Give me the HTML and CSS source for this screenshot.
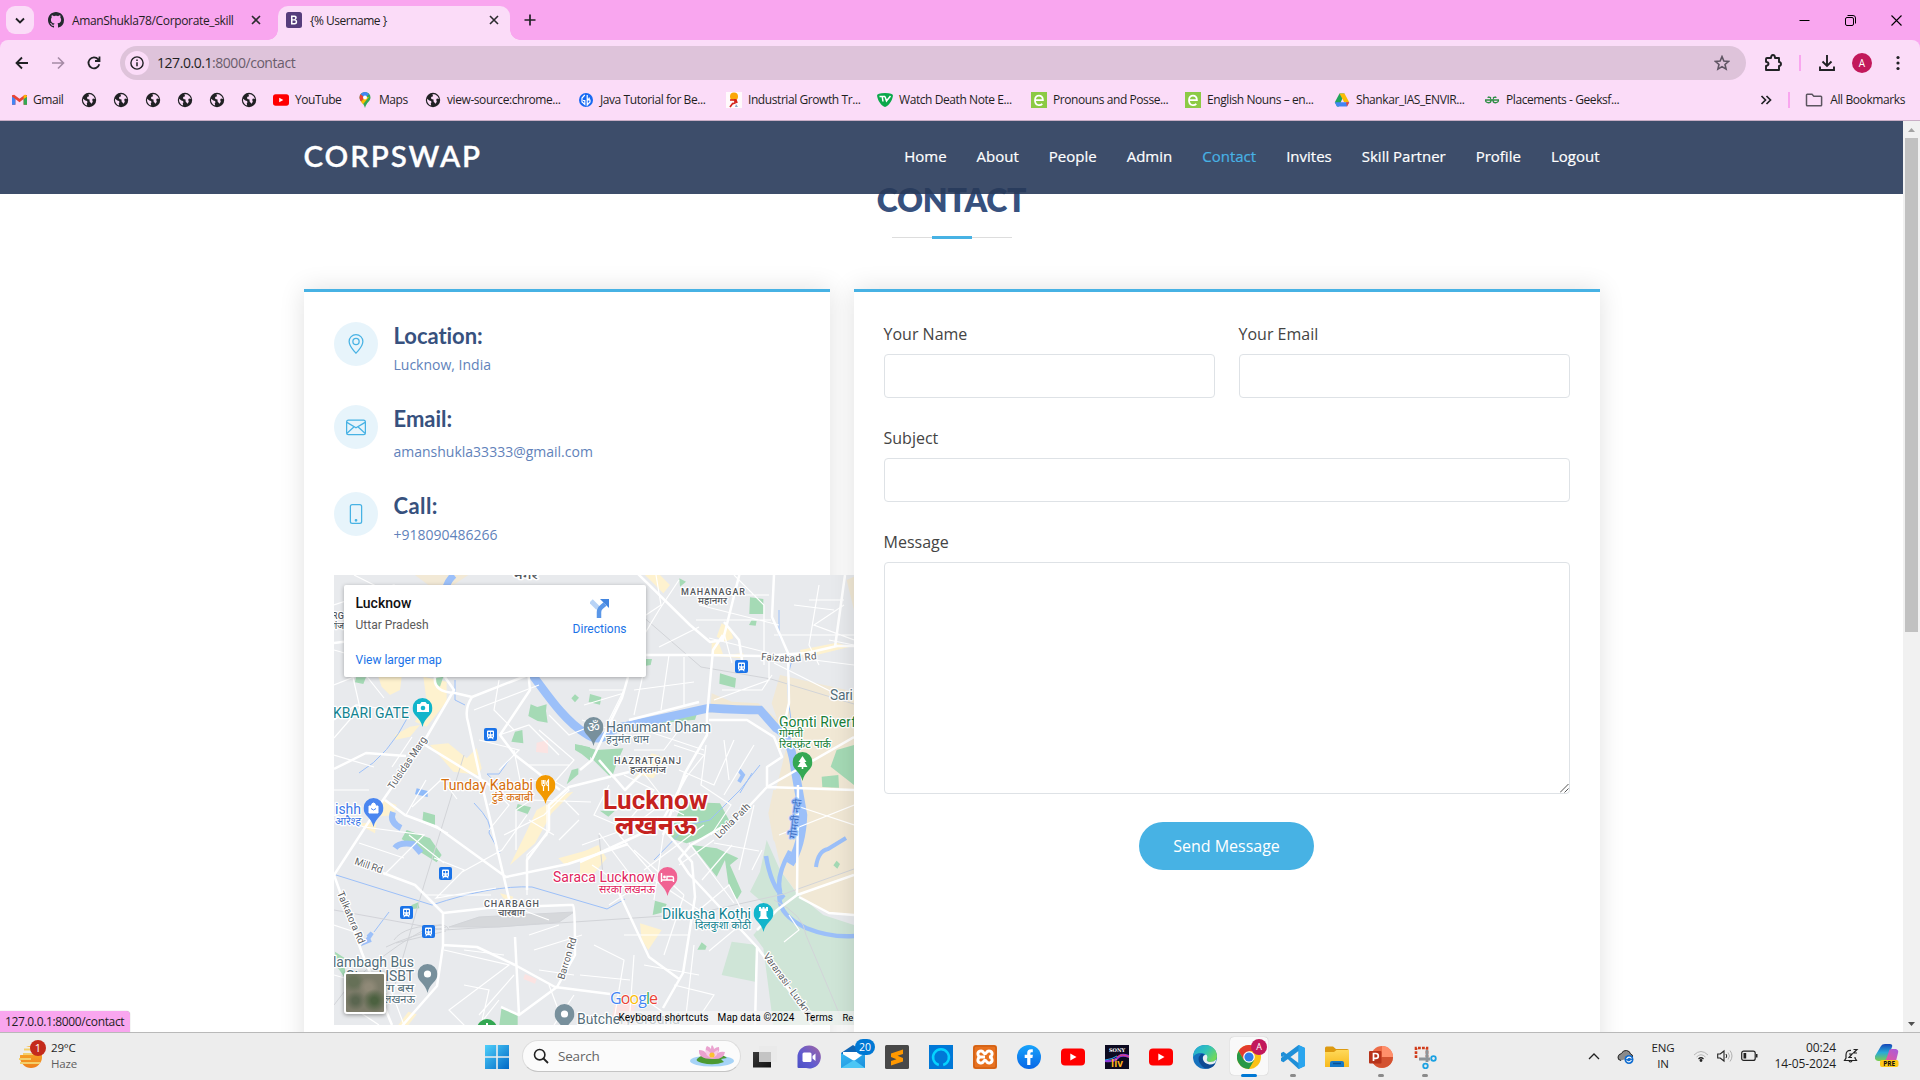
FILE: index.html
```html
<!DOCTYPE html>
<html lang="en">
<head>
<meta charset="utf-8">
<title>{% Username }</title>
<link rel="stylesheet" href="styles.css">
</head>
<body>
<svg class="defs" width="0" height="0" aria-hidden="true">
  <defs>
    <linearGradient id="gWin" x1="0" y1="0" x2="1" y2="1"><stop offset="0" stop-color="#4fd0fb"/><stop offset="1" stop-color="#0067c5"/></linearGradient>
    <linearGradient id="gTeams" x1="1" y1="0" x2="0" y2="1"><stop offset="0" stop-color="#a266a4"/><stop offset=".6" stop-color="#5f5bd0"/><stop offset="1" stop-color="#4a4fc4"/></linearGradient>
    <linearGradient id="gMail" x1="0" y1="0" x2="1" y2="1"><stop offset="0" stop-color="#36b7f2"/><stop offset="1" stop-color="#1a8fdc"/></linearGradient>
    <linearGradient id="gEdge" x1="0" y1="0" x2="1" y2=".6"><stop offset="0" stop-color="#1fa6dd"/><stop offset=".55" stop-color="#32c3b8"/><stop offset="1" stop-color="#72d85a"/></linearGradient>
    <linearGradient id="gFb" x1="0" y1="0" x2="0" y2="1"><stop offset="0" stop-color="#18a3fb"/><stop offset="1" stop-color="#0866e6"/></linearGradient>
    <linearGradient id="gFold" x1="0" y1="0" x2="0" y2="1"><stop offset="0" stop-color="#ffd95a"/><stop offset="1" stop-color="#f7b91c"/></linearGradient>
    <linearGradient id="gSun" x1="0" y1="0" x2="0" y2="1"><stop offset="0" stop-color="#fbb52c"/><stop offset="1" stop-color="#ee7f1b"/></linearGradient>
    <linearGradient id="gCop1" x1="0" y1="0" x2="0" y2="1"><stop offset="0" stop-color="#1546b8"/><stop offset=".5" stop-color="#28a9d8"/><stop offset="1" stop-color="#7fce4a"/></linearGradient>
    <linearGradient id="gCop2" x1="1" y1="0" x2="0" y2="1"><stop offset="0" stop-color="#a45be0"/><stop offset="1" stop-color="#f0568f"/></linearGradient>
    <linearGradient id="gTask" x1="0" y1="0" x2="1" y2="1"><stop offset="0" stop-color="#3b3b3b"/><stop offset="1" stop-color="#111111"/></linearGradient>
    <symbol id="globe" viewBox="0 0 16 16"><circle cx="8" cy="8" r="7.2" fill="#202124"/><path d="M2.2 6.8 4.3 8.6 6 9l.6 1.2-.8.8.3 2.6C3.500 12.700 2 10.400 2 8zM7.400 2.200c3.300-.3 6 1.900 6.500 4.800L12 6.500l-.8 1.300.6 2-1.300 1.900L8.600 9.500 8.500 7.600 6.300 6.900 6.100 5l2-.8z" fill="#fbdcf8"/></symbol>
    <symbol id="yt" viewBox="0 0 24 18"><rect y=".5" width="24" height="17" rx="4" fill="#f00"/><path d="M9.300 5.500v7l6.200-3.500z" fill="#fff"/></symbol>
    <symbol id="close" viewBox="0 0 10 10"><path d="M1 1l8 8M9 1L1 9" stroke="#2b2b2e" stroke-width="1.600"/></symbol>
    <symbol id="ebook" viewBox="0 0 16 16"><rect width="16" height="16" fill="#8cca45"/><path d="M3.800 8.200h8.100C12 2 4 2 4 8.200c0 6 5.500 5.600 7.300 3.600" fill="none" stroke="#fff" stroke-width="1.800"/></symbol>
    <symbol id="train" viewBox="0 0 13 13"><rect width="13" height="13" rx="2" fill="#1a73e8"/><path d="M4 2.500h5q1 0 1 1V9L9 10l.8 1.300H8.600L8 10.300H5l-.6 1H3.200L4 10 3 9V3.500q0-1 1-1z" fill="#fff"/><path d="M4.200 4h1.900v2.200H4.200zM6.900 4h1.900v2.200H6.900zM4.200 7.500h1.200v1.200H4.200zM7.600 7.500h1.200v1.200H7.600z" fill="#1a73e8"/></symbol>
    <symbol id="pin" viewBox="0 0 20 29"><path d="M10 0a10 10 0 0 1 10 10c0 8-8 9-10 19C8 19 0 18 0 10A10 10 0 0 1 10 0z"/></symbol>
  </defs>
</svg>

<div class="tabstrip">
  <div class="tab-search"><svg width="10" height="7" viewBox="0 0 10 7"><path d="M1 1.500 5 5.500 9 1.500" fill="none" stroke="#202124" stroke-width="1.800"/></svg></div>
  <div class="tab">
    <svg width="16" height="16" viewBox="0 0 16 16"><path fill="#24292f" d="M8 0C3.580 0 0 3.580 0 8c0 3.540 2.290 6.530 5.470 7.590.4.070.55-.17.55-.38 0-.19-.01-.82-.01-1.490-2.010.37-2.530-.49-2.690-.94-.09-.23-.48-.94-.82-1.130-.28-.15-.68-.52-.01-.53.63-.01 1.080.58 1.230.82.72 1.210 1.870.87 2.330.66.070-.52.280-.87.510-1.070-1.780-.2-3.640-.89-3.640-3.950 0-.87.310-1.590.82-2.150-.08-.2-.36-1.020.080-2.120 0 0 .67-.21 2.200.82.640-.18 1.320-.27 2-.27s1.360.09 2 .27c1.530-1.040 2.200-.82 2.200-.82.440 1.100.160 1.920.080 2.120.51.560.82 1.270.82 2.150 0 3.070-1.870 3.750-3.650 3.950.29.250.54.730.54 1.480 0 1.070-.01 1.930-.01 2.200 0 .21.150.46.550.38A8.010 8.010 0 0 0 16 8c0-4.420-3.580-8-8-8z"/></svg>
    <span class="tab-title t-git">AmanShukla78/Corporate_skill</span>
    <svg class="tab-x" width="10" height="10"><use href="#close"/></svg>
  </div>
  <div class="tab active">
    <svg width="16" height="16" viewBox="0 0 16 16"><rect width="16" height="16" rx="2.500" fill="#563d7c"/><path d="M5 3.500h3.500q2.300 0 2.300 2.100 0 1.500-1.300 1.900 1.700.4 1.700 2.300 0 2.700-2.700 2.700H5zM6.500 5v2.200h1.700q1 0 1-1.100T8.200 5zM6.500 8.500v2.600h2q1.200 0 1.200-1.300T8.500 8.500z" fill="#fff" fill-rule="evenodd"/></svg>
    <span class="tab-title">{% Username }</span>
    <svg class="tab-x" width="10" height="10"><use href="#close"/></svg>
  </div>
  <svg class="new-tab" width="12" height="12" viewBox="0 0 12 12"><path d="M6 .5v11M.5 6h11" stroke="#202124" stroke-width="1.700"/></svg>
  <div class="win-controls">
    <svg width="11" height="11" viewBox="0 0 11 11"><path d="M.5 5.500h10" stroke="#000"/></svg>
    <svg width="11" height="11" viewBox="0 0 11 11"><rect x=".5" y="2.500" width="8" height="8" rx="1.500" fill="none" stroke="#000"/><path d="M2.500.5H8q2.500 0 2.500 2.500v5.500" fill="none" stroke="#000"/></svg>
    <svg width="11" height="11" viewBox="0 0 11 11"><path d="M.5.5l10 10M10.500.5l-10 10" stroke="#000" stroke-width="1.100"/></svg>
  </div>
</div>

<div class="toolbar">
  <div class="nav-icons">
    <svg width="16" height="16" viewBox="0 0 16 16"><path d="M14 8H3M8 2.500 2.500 8 8 13.500" fill="none" stroke="#202124" stroke-width="1.800"/></svg>
    <svg width="16" height="16" viewBox="0 0 16 16"><path d="M2 8h11M8 2.500 13.500 8 8 13.500" fill="none" stroke="#a58aa5" stroke-width="1.600"/></svg>
    <svg width="16" height="16" viewBox="0 0 16 16"><path d="M13.300 9.300A5.500 5.500 0 1 1 12.200 4.300L13.500 6M13.500 1.500V6H9" fill="none" stroke="#202124" stroke-width="1.800"/></svg>
  </div>
  <div class="omnibox">
    <span class="site-info"><svg width="14" height="14" viewBox="0 0 14 14"><circle cx="7" cy="7" r="6.100" fill="none" stroke="#202124" stroke-width="1.400"/><path d="M7 6.200v4M7 3.500v1.400" stroke="#202124" stroke-width="1.500"/></svg></span>
    <span class="url">127.0.0.1<i>:8000/contact</i></span>
    <svg class="star" width="16" height="16" viewBox="0 0 18 18"><path d="M9 1.800l2.100 4.900 5.300.5-4 3.500 1.200 5.200L9 13.100l-4.600 2.800 1.200-5.200-4-3.500 5.300-.5z" fill="none" stroke="#5f5563" stroke-width="1.800"/></svg>
  </div>
  <div class="tools">
    <svg width="20" height="20" viewBox="0 0 20 20"><path d="M4 5h4q0-3 2-3t2 3h4v4q2 .2 2 2t-2 2v4H3v-4q2.500-.5 2.500-2.200T3 8.700V6q0-1 1-1z" fill="none" stroke="#202124" stroke-width="1.900" stroke-linejoin="round"/></svg>
    <span class="sep"></span>
    <svg width="18" height="18" viewBox="0 0 18 18"><path d="M9 1v10.500M4.500 7.500 9 12l4.500-4.500M2 12.500V16h14v-3.500" fill="none" stroke="#202124" stroke-width="1.900"/></svg>
    <span class="avatar">A</span>
    <svg width="4" height="16" viewBox="0 0 4 16" fill="#202124"><circle cx="2" cy="2.500" r="1.600"/><circle cx="2" cy="8" r="1.600"/><circle cx="2" cy="13.500" r="1.600"/></svg>
  </div>
</div>

<div class="bookmarks">
  <div class="bm"><svg width="15" height="16" viewBox="0 0 16 16"><path d="M0 3v10h3.600V7L8 10.300 12.400 7v6H16V3L13.700 2.300 8 6.700 2.300 2.300z" fill="#ea4335"/><path d="M0 4.200V13h3.600V7z" fill="#4285f4"/><path d="M12.400 7v6H16V4.200z" fill="#34a853"/><path d="M12.400 7V3.300l2-.9L16 4v.4z" fill="#fbbc04"/></svg><span>Gmail</span></div>
  <div class="bm"><svg width="16" height="16"><use href="#globe"/></svg></div>
  <div class="bm"><svg width="16" height="16"><use href="#globe"/></svg></div>
  <div class="bm"><svg width="16" height="16"><use href="#globe"/></svg></div>
  <div class="bm"><svg width="16" height="16"><use href="#globe"/></svg></div>
  <div class="bm"><svg width="16" height="16"><use href="#globe"/></svg></div>
  <div class="bm"><svg width="16" height="16"><use href="#globe"/></svg></div>
  <div class="bm"><svg width="16" height="12"><use href="#yt"/></svg><span>YouTube</span></div>
  <div class="bm"><svg width="16" height="16" viewBox="0 0 16 16"><path d="M8 0a5.500 5.500 0 0 1 5.500 5.500C13.500 9.500 9.500 10 8 16 6.500 10 2.500 9.500 2.500 5.500A5.500 5.500 0 0 1 8 0z" fill="#34a853"/><path d="M3.800 2 8 5.500 4 9.800Q1.200 5.500 3.800 2z" fill="#ea4335"/><path d="M3.700 2.100Q8-2 12 2L8 6z" fill="#4285f4"/><path d="M8 5.500 4 9.800l2 2.400L12 5z" fill="#fbbc04"/><circle cx="8" cy="5.500" r="2" fill="#fff"/></svg><span>Maps</span></div>
  <div class="bm"><svg width="16" height="16"><use href="#globe"/></svg><span>view-source:chrome...</span></div>
  <div class="bm"><svg width="16" height="16" viewBox="0 0 16 16"><circle cx="8" cy="8" r="7" fill="#1769f2"/><path d="M6.800 3 4 6v4l2.800 2.500V8.500H5M9.200 3v4h2v-1.500M9.200 13 12 10V8H9.200z" fill="none" stroke="#fff" stroke-width="1.200"/></svg><span>Java Tutorial for Be...</span></div>
  <div class="bm"><svg width="16" height="16" viewBox="0 0 16 16"><rect width="16" height="16" fill="#fffafc"/><circle cx="8" cy="4.500" r="4" fill="#fba706"/><path d="M9 7v4l-3 1M4 8h6l1 3M7 11l-3 4" fill="none" stroke="#d4221b" stroke-width="1.700"/><path d="M10 12l2 3H9z" fill="#8fa3c4"/></svg><span>Industrial Growth Tr...</span></div>
  <div class="bm"><svg width="16" height="16" viewBox="0 0 16 16"><path d="M0 3.500Q0 1 8 1t8 2.500C15 10 11 14 8 15 5 14 1 10 0 3.500z" fill="#0ba84b"/><path d="M2.500 4.500H8M5.200 4.500 6 9.500M8 4.500l1.500 4.500 4-5" fill="none" stroke="#fff" stroke-width="1.500"/></svg><span>Watch Death Note E...</span></div>
  <div class="bm"><svg width="16" height="16"><use href="#ebook"/></svg><span>Pronouns and Posse...</span></div>
  <div class="bm"><svg width="16" height="16"><use href="#ebook"/></svg><span>English Nouns – en...</span></div>
  <div class="bm"><svg width="16" height="16" viewBox="0 0 16 16"><path d="M5.500 1.500h5L5 14.500H3L.8 10.300z" fill="#21a45a"/><path d="M5.500 1.500h5l4.700 8.800h-5z" fill="#fbbc04"/><path d="M3.300 10.300h11.900L13 14.500H3L.8 10.300z" fill="#4285f4"/><path d="M12 10.300h3.200L13 14.500z" fill="#ea4335"/></svg><span>Shankar_IAS_ENVIR...</span></div>
  <div class="bm"><svg width="16" height="16" viewBox="0 0 16 16"><path d="M7 6Q5.500 4.700 3.500 5.500M1 8h14M7 8.500c0 3-5 3-5.500 0M9 6q1.500-1.300 3.500-.5M9 8.500c0 3 5 3 5.500 0" fill="none" stroke="#2f8d46" stroke-width="1.300"/><path d="M7.200 8Q7 5 4 5M8.800 8q.2-3 3.200-3" fill="none" stroke="#2f8d46" stroke-width="1"/></svg><span>Placements - Geeksf...</span></div>
  <div class="bm-right">
    <svg width="12" height="10" viewBox="0 0 12 10"><path d="M1.500 1l4 4-4 4M6.500 1l4 4-4 4" fill="none" stroke="#202124" stroke-width="1.700"/></svg>
    <span class="sep"></span>
    <svg width="18" height="14" viewBox="0 0 18 14"><path d="M1.500 12V2q0-.8.800-.8H7l1.800 2h7q.8 0 .8.800v8q0 .8-.8.800H2.300q-.8 0-.8-.8z" fill="none" stroke="#5c5560" stroke-width="1.500"/></svg>
    <span>All Bookmarks</span>
  </div>
</div>

<div class="viewport">
  <div class="page">
    <header class="site-header">
      <div class="container header-row">
        <a class="logo">CORPSWAP</a>
        <nav class="menu"><a>Home</a><a>About</a><a>People</a><a>Admin</a><a class="current">Contact</a><a>Invites</a><a>Skill Partner</a><a>Profile</a><a>Logout</a></nav>
      </div>
    </header>
    <div class="section-title"><h2><span>CONTACT</span></h2></div>
    <div class="container columns">
      <div class="card info">
        <div class="entry r1">
          <span class="bubble"><svg width="20" height="20" viewBox="0 0 16 16" fill="#47b2e4"><path d="M12.166 8.940c-.524 1.062-1.234 2.120-1.960 3.070A31.493 31.493 0 0 1 8 14.580a31.481 31.481 0 0 1-2.206-2.570c-.726-.95-1.436-2.008-1.960-3.070C3.304 7.867 3 6.862 3 6a5 5 0 0 1 10 0c0 .862-.305 1.867-.834 2.940zM8 16s6-5.686 6-10A6 6 0 0 0 2 6c0 4.314 6 10 6 10z"/><path d="M8 8a2 2 0 1 1 0-4 2 2 0 0 1 0 4zm0 1a3 3 0 1 0 0-6 3 3 0 0 0 0 6z"/></svg></span>
          <div><h4 class="h-loc">Location:</h4><p>Lucknow, India</p></div>
        </div>
        <div class="entry r2">
          <span class="bubble"><svg width="20" height="20" viewBox="0 0 16 16" fill="none" stroke="#47b2e4"><rect x=".5" y="2.500" width="15" height="11.500" rx="1.500"/><path d="M.7 4.300 8 8.700l7.300-4.400M.8 13l5.700-5.200M15.200 13 9.500 7.800"/></svg></span>
          <div><h4 class="h-mail">Email:</h4><p>amanshukla33333@gmail.com</p></div>
        </div>
        <div class="entry r3">
          <span class="bubble"><svg width="20" height="20" viewBox="0 0 16 16" fill="none" stroke="#47b2e4"><rect x="3.500" y=".5" width="9" height="15" rx="1.500"/><circle cx="8" cy="13" r=".6" fill="#47b2e4"/></svg></span>
          <div><h4 class="h-call">Call:</h4><p>+918090486266</p></div>
        </div>
        <div class="map">
          <svg class="map-art" width="520" height="450" viewBox="0 0 520 450">
            <rect width="520" height="450" fill="#e8eaed"/>
            <!-- land use -->
            <g transform="translate(-14 -15) scale(.33333)">
              <path d="M285 45h160l-45 30h-75z" fill="#f2e9d6"/>
              <path d="M175 350h70l-5 40-30 15-25-25zM310 350l70 15v60l-60 75-35-15 35-60zM225 525l45-25 30-5-30 35-45 10zM330 555l55-5 55 45 30-30 15 60-10 20-75-10-35-40z" fill="#fef2cf"/>
              <path d="M108 352h30l-8 20-25-5zM345 355l25-5-10 30-15-10zM632 433l20 8 28-8-2 20 5 35-30-5-28-15zM585 515l22-5 3 40-36-5zM765 552l45 10v40l-25-20-20-12zM765 403l12 10-12 14-11-12zM755 630l20-5v18l-35 30z" fill="#a5dab5"/>
              <path d="M650 548l34-8v40l-36-4z" fill="#fbe3e2"/><path d="M290 685l33 8v18l-38-8z" fill="#90bbf9"/>
            </g>
            <g transform="translate(246 -15) scale(.33333)">
              <path d="M195 45h45l30 30-20 25-40-40zM425 190l25 15 10 30-25 10-25-15zM395 250l20-5 15 40 60-5v15l-95-8zM660 270l110-22 40 12-140 35zM215 580l45 15-40 60-40-10-45 50z" fill="#fef2cf"/>
              <path d="M600 345l222 50v325H580l40-160-45-130zM395 400l60 25 80 5 70 60-20 10-60-42-135 0zM800 60l22-10v100z" fill="#f1e8d5"/>
              <path d="M510 112l40 5v45h-42zM420 340l48 15-3 28-47-12zM515 180l15 2-3 15-20-2zM298 55l20 10-18 15zM30 402l34 10-4 22-34-8zM150 492l200-28-5 15-150 15zM0 555l50 15 80-5-20 45-15 45-70-70zM770 570l52-15v120l-70-55zM725 650l50-5 2 38-50-2zM198 297h18l-4 18-14 2z" fill="#a5dab5"/>
            </g>
            <g transform="translate(-14 215) scale(.33333)">
              <path d="M190 30l40 15-10 30-50 5zM125 100l45-5-5 35-45-25zM650 60l90-50 20-5-65 65-50 90-75 65 40-80zM715 205l90-25v20l-70 25zM265 665l25 8-25 32h-30zM540 310l40 10-5 15-25-10z" fill="#fef2cf"/>
              <path d="M310 65l35 10v30l-38-10zM260 120l70 25 35 50-15 22-60-38-45-32zM275 345l20-8 3 18-28 3zM593 42l40 10-10 20-35-12zM660 35l-25 18zM45 485l30 20v60l-27-40zM545 650l48 20v35h-55z" fill="#a5dab5"/>
              <path d="M615 552l35 15-5 14-35-14z" fill="#fbe3e2"/>
            </g>
            <g transform="translate(246 215) scale(.33333)">
              <path d="M580 0h242v320l-167-10 20-130 0-180-55 200-40-50-15-80z" fill="#f1e8d5"/>
              <path d="M580 0h242v325l-167-10-50-70-25-110zM655 320l167-70v125l-80-5z" fill="#f1e8d5"/>
              <path d="M560 150l40 90 50 70 80 65 92 30v300H580l-30-230-30-40 60-70-70-60 30-60zM455 455l75 10-5 110-100-20z" fill="#cfe5d7"/>
              <path d="M310 35l110 5 35 65-65 30-70 25-50-15 10-40 10-25zM335 165l75 10 65 30-25 20 35 80-15 25-25-50-10-70-25 50zM225 332l35 10-10 25-32 8zM365 457l15 12-4 10h-24zM60 62h45l-20 18zM770 212l10 10-8 14-12-10z" fill="#a5dab5"/>
              <path d="M0 190l55-25 25 40-50 60-30-10zM180 400l65 20-40 60-20-30z" fill="#fef2cf"/>
              <path d="M105 640h60l-5 65H90z" fill="#fbe3e2"/>
            </g>
            <!-- water -->
            <g class="water">
              <path d="M120 0q-5 4-8 12" stroke-width="7"/>
              <path d="M197 98c18 24 34 48 54 60q12 9 22 2 8-8 20-9l82-18q30 2 51 2l16 18q15 8 19 42l8 45q-1 30-13 49" stroke-width="8.500"/>
              <path d="M456 276q-14 25-10 40c-4 20 12 30 26 37q25 10 49 8M432 281q5 30 18 42" stroke-width="4.500"/>
              <path d="M482 292q2-16 12-18l18-11" stroke-width="4"/>
              <path d="M59 237q-4 10 8 16M61 273q4-6 18-4l8 9" stroke-width="6"/>
              <path d="M405 195l4 5-4 7" stroke-width="4"/>
              <path d="M34 362l4-4-6 9 5-2" stroke-width="4"/>
            </g>
            <g class="stream">
              <path d="M121 105v20l10 5M75 140q-20 40-50 58M2 300l96 30q60-20 100-18l75 22 18-10M140 228q20 20 15 30l11 20M445 35v25l13 25q-8 20-1 60M55 337l-15 20M175 185l-10 14-12 0 15 14M320 285l34-35 22-5 30-30 20-25M406 218l12-20"/>
            </g>
            <!-- railways -->
            <g class="rail">
              <path d="M307 40l60 52 70 12 83 25M0 335l110 20 130-8 120-8 90-20 70-25M110 350q-40 0-50 15M112 352q-40 10-60 20M112 356l-50 12M130 180l-40 130-35 120M0 430q20-30 65-60t50-15M265 260l5 50"/>
              <path d="M115 352l30-10 95-5-15 10-60 5z" class="yard"/>
              <path d="M440 325q30 15 32 35l38 90"/>
            </g>
            <!-- minor streets -->
            <g class="minor">
              <path d="M0 75l70 20M0 30l60-20 25 15M20 0l40 20M0 110l30-12 20 25M0 145l22-15 35 5M0 180l40 12M18 98l8 35-26 30M58 192l20-30M92 205l-20 35 42 18M78 232l30-28 15 20M0 215l35 0M0 240l30 12 60 8-40 40M25 268l45 15M75 260l35 28M100 283l30 12-28 28 60-10M128 297l40-22 25-35M92 320l25 0 40 0"/>
              <path d="M140 135l65-25M165 105l-5 30 20 20M145 165l40 10-20 20M165 160l30-10 30 30M205 155l35 30-22 25M195 190l40 0M215 140l20 20 20-8M180 175l8 40M150 205l25 25-20 25M210 200l25 15-25 25M155 230l20-20 30-5M195 245l25 15M170 260l40-20"/>
              <path d="M322 0l5 30-30 20M345 5l-20 30-15 25M365 30l80 20M375 20l60 0M400 0l30 30v60M437 45l-75 0M310 95l-10 45M335 80l-8 55M350 82v50M300 115l60-8M318 80h40M325 72l40-20M398 88l-8-30M435 78l-60-15M380 125l55-20 0-18M440 88l60 30M440 60l80 0M485 10l-10 60 10 20M460 30l40 5M510 30l-30 20 40 15M495 65l25 5M480 85l40 5M388 115l40 0 10-15"/>
              <path d="M255 115h35l-15 30M250 130l40-12M248 145l60 20M310 155l60 20M300 175l30 0 15-20M340 170l30 10-20 25M345 195l35 15 20-45M305 192l35 45M290 200l30 15-25 30M300 250l40-30M310 220l40 20M372 170l-5 40 30 20-20 30M390 165l5 40M420 170l-30 50M275 210l-15 30 35 15"/>
              <path d="M248 270l55-20M265 258l45 60M258 290l45 30M285 260l35 40-45 30M300 275l50 45M310 295l60-45M320 305l60 40M330 255l-10 70M355 268l45 60M368 305l30-35M345 290l35-25M380 268l45 8M365 335l30-25 15 30M350 320l-20 60M290 360h65M260 370l30 15-10 60M300 380l-5 70M310 390l55 10M360 370l-8 70M375 376l30-25M246 400l50 5M340 410l40 10-20 30M305 420l35 25M420 230l-15 65M428 275l-10 20"/>
              <path d="M130 375l40 5M110 375l65 15-60 45 20 20M130 410l25 5-8 35M180 400l-35 40M195 360l30-10M200 375l48-15M205 395l35 5M175 330l40 15M15 430l30 20M55 410l15 40M0 400l35 10M0 350l30 10M145 450l20-25M215 410l15 40M240 420l-20 30M455 340l10 15-15 12M475 25h35M460 230l60 20M445 260l75-30"/>
              <path d="M182 275l0-40 15-10 60 2M213 230v30l-20 20v40M230 225l15 15M245 245l-20 20"/>
            </g>
            <!-- main roads -->
            <g class="major">
              <path d="M0 68l80-10 40 57-28 48-45 65L0 300l28 78 30 72M101 102q-2 15 20 16l17 4 66-26M138 122q-8 12-4 25l12 55 30 126M194 95l2 20-30 45 15 20 45 35M91 170l70 43M0 194l32-16 40 3M51 225l20 15 32 12 69 50 62-13 60-20M49 298l32 12 28 28 45-5 80-3 5 0q2 0 2 50l-18 32-38 28-18-8M109 338v33l-6 40-35 40M108 370l35 2 38 18 40 22 55 7M181 362l4 78M193 315v-30l22-30v-25l20-18 60-15"/>
              <path d="M300-5l56 55 20 17 13-2 20-80M389 60l-10 15-6 65v20l-22 38-22 62M298 80h70l60 1 45-3 30-7h20M390 47l15 18 3 20M440 0l-2 42 16 36 1 50-9 40M246 195l12-10 30-62 10-35M265 185l26 30 25-25M295 145l70-18M375 145l38 0 27 17 8 20-15 10v20l87 3M433 212l87-50M433 212l-28 30-48 28M511 0l-10 72"/>
              <path d="M246 287l80-37 27-50M326 250l32 37 3 35-12 76-20 35M357 270l-12 14 10 15 54 58 14 15 40 54 15 24M423 372l-2 78M280 307l35 75 30 22M464 210l-1 110 57-20M465 322l30 16 25 2M463 320l-20 15-20 20"/>
            </g>
            <!-- markers -->
            <use href="#train" x="150" y="153" width="13" height="13"/><use href="#train" x="401" y="85" width="13" height="13"/><use href="#train" x="105" y="292" width="13" height="13"/><use href="#train" x="66" y="331" width="13" height="13"/><use href="#train" x="88" y="350" width="13" height="13"/>
            <use href="#pin" x="78.500" y="123" width="20" height="29" fill="#12b5cb"/><path d="M83 129h3l1.500-2h4l1.500 2h2v8H83z" fill="#fff"/><circle cx="89" cy="133" r="2.300" fill="#12b5cb"/>
            <use href="#pin" x="249.500" y="142" width="20" height="29" fill="#78909c"/><text x="259.500" y="157" class="glyph">ॐ</text>
            <use href="#pin" x="201.500" y="200" width="20" height="29" fill="#f29900"/><path d="M208 205v4q0 2 1.500 2v5M211 205v4q0 2-1.500 2M209.500 205v4M214.500 216v-11q-3 3-1 6" stroke="#fff" stroke-width="1.200" fill="none"/>
            <use href="#pin" x="29.500" y="223" width="20" height="29" fill="#4a86f0"/><path d="M35 231h9v7h-9zM37.500 231q0-3 2-3t2 3" fill="#fff" stroke="#fff"/><path d="M37 233.500q2.500 3 5 0" fill="none" stroke="#4a86f0"/>
            <use href="#pin" x="458.500" y="177" width="20" height="29" fill="#34a853"/><path d="M468.500 181l4 6h-2l3 5h-4.200v2h-1.600v-2h-4.200l3-5h-2z" fill="#fff"/>
            <use href="#pin" x="323.500" y="292" width="20" height="29" fill="#f06292"/><path d="M327.500 298v9M327.500 305h12v2M339.500 307v-4q0-1.500-1.500-1.500h-5v3.500" fill="none" stroke="#fff" stroke-width="1.400"/><circle cx="330.500" cy="302" r="1.400" fill="#fff"/>
            <use href="#pin" x="419.500" y="328" width="20" height="29" fill="#12b5cb"/><path d="M425 332h2v1.500h1.500V332h2v1.500h1.500V332h2v4h-1.500v5l2 3h-10l2-3v-5H425z" fill="#fff"/>
            <use href="#pin" x="83.500" y="389" width="20" height="29" fill="#78909c"/><circle cx="93.500" cy="399" r="3.600" fill="#fff"/>
            <use href="#pin" x="220.500" y="429" width="20" height="29" fill="#78909c"/><circle cx="230.500" cy="439" r="3.600" fill="#fff"/>
            <circle cx="153" cy="454" r="10" fill="#34a853"/><path d="M153 448v3" stroke="#fff" stroke-width="2"/>
            <!-- labels -->
            <g class="lbl">
              <text x="180" y="4" textLength="24" lengthAdjust="spacingAndGlyphs" class="area">नगर</text>
              <text x="-2" y="44" textLength="12" class="area">RG</text><text x="-2" y="54" textLength="12" lengthAdjust="spacingAndGlyphs" class="area">गंज</text>
              <text x="347" y="19.500" textLength="64" class="area">MAHANAGAR</text><text x="364" y="29" textLength="29" lengthAdjust="spacingAndGlyphs" class="area">महानगर</text>
              <text x="280" y="188.500" textLength="67" class="area">HAZRATGANJ</text><text x="296" y="198" textLength="36" lengthAdjust="spacingAndGlyphs" class="area">हजरतगंज</text>
              <text x="150" y="331.500" textLength="55" class="area">CHARBAGH</text><text x="164" y="341" textLength="27" lengthAdjust="spacingAndGlyphs" class="area">चारबाग</text>
              <text x="-1" y="143" textLength="76" class="poi teal">KBARI GATE</text>
              <text x="272" y="156.500" textLength="105" class="poi slate">Hanumant Dham</text><text x="272" y="168" textLength="43" lengthAdjust="spacingAndGlyphs" class="poi2 slate">हनुमंत धाम</text>
              <text x="107" y="214.500" textLength="92" class="poi amber">Tunday Kababi</text><text x="158" y="226" textLength="41" lengthAdjust="spacingAndGlyphs" class="poi2 amber">टुंडे कबाबी</text>
              <text x="1" y="238.500" textLength="26" class="poi blue">ishh</text><text x="1" y="249.500" textLength="26" lengthAdjust="spacingAndGlyphs" class="poi2 blue">आरैश्ह</text>
              <text x="445" y="151.500" textLength="77" class="poi green">Gomti Riverf</text><text x="445" y="162" textLength="24" lengthAdjust="spacingAndGlyphs" class="poi2 green">गोमती</text><text x="445" y="173" textLength="52" lengthAdjust="spacingAndGlyphs" class="poi2 green">रिवरफ़्रंट पार्क</text>
              <text x="496" y="124.500" textLength="23" class="poi slate">Sari</text>
              <text x="219" y="306.500" textLength="102" class="poi pink">Saraca Lucknow</text><text x="265" y="318" textLength="56" lengthAdjust="spacingAndGlyphs" class="poi2 pink">सरका लखनऊ</text>
              <text x="328" y="343.500" textLength="89" class="poi teal">Dilkusha Kothi</text><text x="361" y="354" textLength="56" lengthAdjust="spacingAndGlyphs" class="poi2 teal">दिलकुशा कोठी</text>
              <text x="-1" y="391.500" textLength="81" class="poi slate">lambagh Bus</text><text x="12" y="405.500" textLength="68" class="poi slate">Stand ISBT</text>
              <text x="42" y="417" textLength="38" lengthAdjust="spacingAndGlyphs" class="poi2 slate">बाग बस</text><text x="50" y="428" textLength="31" lengthAdjust="spacingAndGlyphs" class="poi2 slate">लखनऊ</text>
              <text x="243" y="449" textLength="103" class="poi slate">Butchery Ground</text>
              <text x="269" y="233.500" textLength="105" class="city">Lucknow</text><text x="281" y="259" textLength="81" lengthAdjust="spacingAndGlyphs" class="city hi">लखनऊ</text>
              <text transform="translate(59 215) rotate(-56)" textLength="61" class="road">Tulsidas Marg</text>
              <text transform="translate(20 289) rotate(19)" textLength="29" class="road">Mill Rd</text>
              <text transform="translate(3 318) rotate(67)" textLength="56" class="road">Talkatora Rd</text>
              <text transform="translate(230 405) rotate(-73)" textLength="43" class="road">Barron Rd</text>
              <text transform="translate(427 85) rotate(4)" textLength="29" class="road">Faizab</text><text transform="translate(456 87) rotate(-6)" textLength="27" class="road">ad Rd</text>
              <text transform="translate(385 264) rotate(-45)" textLength="45" class="road">Lohia Path</text>
              <text transform="translate(429 381) rotate(54)" textLength="84" class="road">Varanasi - Lucknow</text>
              <text transform="translate(462 264) rotate(-82)" textLength="40" lengthAdjust="spacingAndGlyphs" class="road river">गोमती नदी</text>
            </g>
            <text x="276" y="429" textLength="48" class="google"><tspan fill="#4285f4">G</tspan><tspan fill="#ea4335">o</tspan><tspan fill="#fbbc04">o</tspan><tspan fill="#4285f4">g</tspan><tspan fill="#34a853">l</tspan><tspan fill="#ea4335">e</tspan></text>
          </svg>
          <div class="place">
            <div><b>Lucknow</b><small>Uttar Pradesh</small><a>View larger map</a></div>
            <div class="dir"><svg width="19" height="19" viewBox="0 0 19 19"><path d="M1 2l7 7" stroke="#b8d3f6" stroke-width="5"/><path d="M9 19v-6q0-3 2.500-5L15 5" fill="none" stroke="#5a97e8" stroke-width="4.500"/><path d="M10 0h9v9z" fill="#4285e0"/></svg><a>Directions</a></div>
          </div>
          <div class="sat"></div>
          <div class="credits"><span class="k">Keyboard shortcuts</span><span class="d">Map data ©2024</span><span class="t">Terms</span><span class="r">Re</span></div>
        </div>
      </div>
      <div class="card form">
        <div class="two"><label>Your Name<i class="field"></i></label><label>Your Email<i class="field"></i></label></div>
        <label>Subject<i class="field"></i></label>
        <label>Message<i class="field area-field"><svg width="9" height="9" viewBox="0 0 9 9"><path d="M0 8.500 8.500 0M4.500 8.500l4-4" stroke="#555" stroke-width="1"/></svg></i></label>
        <div class="send"><button>Send Message</button></div>
      </div>
    </div>
  </div>
  <div class="scrollbar"><svg width="17" height="17" viewBox="0 0 17 17"><path d="M5 11h7L8.500 7z" fill="#a3a3a3"/></svg><i class="thumb"></i><svg class="down" width="17" height="17" viewBox="0 0 17 17"><path d="M5 7h7l-3.500 4z" fill="#505050"/></svg></div>
  <div class="status">127.0.0.1:8000/contact</div>
</div>

<div class="taskbar">
  <div class="weather">
    <svg width="28" height="30" viewBox="0 0 28 30"><circle cx="12" cy="17" r="11" fill="url(#gSun)"/><path d="M0 7h14v8H0z" fill="#ededed"/><path d="M5 9.500h8M4 14h10M0 19h12M1 23h20" stroke="#f3cf6c" stroke-width="2"/><circle cx="19" cy="8" r="8" fill="#c42b1c"/></svg>
    <b class="badge">1</b>
    <div class="lines"><span>29°C</span><span class="dim">Haze</span></div>
  </div>
  <div class="apps">
    <div class="app start"><svg width="24" height="24" viewBox="0 0 24 24"><path d="M0 0h11.200v11.200H0zM12.800 0H24v11.200H12.800zM0 12.800h11.200V24H0zM12.800 12.800H24V24H12.800z" fill="url(#gWin)"/></svg></div>
    <div class="search">
      <svg width="16" height="16" viewBox="0 0 16 16"><circle cx="6.700" cy="6.700" r="5.200" fill="none" stroke="#222" stroke-width="1.600"/><path d="M10.500 10.500 15 15" stroke="#222" stroke-width="1.800"/></svg>
      <span>Search</span>
      <svg class="lotus" width="46" height="24" viewBox="0 0 46 24"><ellipse cx="23" cy="17" rx="22" ry="5.500" fill="#a6d3f7"/><path d="M8 15q5-5 15-4 11-1 15 3l-6 1 3 3q-10 4-22 1-7-2-5-4z" fill="#4c9a32"/><path d="M23 15Q9 15 10 6q5 0 7 3-1-5 1-7 3 1 4 3 0-3 1-4 2 2 2 4 2-2 5-2 1 3-1 6 3-2 7-1-1 8-13 7z" fill="#eaa2cf"/><path d="M23 14Q15 11 17 6q4 1 6 6 2-5 6-6 1 5-6 8z" fill="#f7cde6"/><circle cx="23" cy="11" r="2.600" fill="#fbc233"/></svg>
    </div>
    <div class="app"><svg width="24" height="24" viewBox="0 0 24 24"><path d="M0 7h18v15.500H0z" fill="url(#gTask)"/><path d="M6 1h18v16H6z" fill="#e9e9e9" fill-opacity=".82"/><path d="M6 7h12v10H6z" fill="#c4c4c4"/></svg></div>
    <div class="app"><svg width="24" height="24" viewBox="0 0 24 24"><path d="M12 .5A11.500 11.500 0 1 1 9 23H1.500Q.5 23 .5 22V12A11.500 11.500 0 0 1 12 .5z" fill="url(#gTeams)"/><rect x="5.500" y="7.500" width="9" height="9.500" rx="1.500" fill="#fff"/><path d="M15.500 11l3-2.500v7.500l-3-2.500z" fill="#fff"/></svg></div>
    <div class="app"><svg width="24" height="24" viewBox="0 0 24 24"><path d="M0 8l12-8 12 8v15H0z" fill="#1066b5"/><path d="M2 7h20v10H2z" fill="#fff"/><path d="M0 8l13 8L24 8v15H0z" fill="url(#gMail)"/><path d="M0 23 13 15l11 8z" fill="#4cc6f5"/></svg><b class="count">20</b></div>
    <div class="app"><svg width="24" height="24" viewBox="0 0 24 24"><rect width="24" height="24" rx="1.500" fill="#484848"/><path d="M6 8.500 18 4.500V9l-5.500 1.800L18 13v3.500L6 20.500V16l5.500-1.800L6 12z" fill="#ff9800"/></svg></div>
    <div class="app"><svg width="24" height="24" viewBox="0 0 24 24"><rect width="24" height="24" fill="#0078d7"/><path d="M9.800 20A8 8 0 1 1 14.200 20" fill="none" stroke="#05d3ff" stroke-width="2.400"/></svg></div>
    <div class="app"><svg width="24" height="24" viewBox="0 0 24 24"><rect width="24" height="24" rx="2.500" fill="#e8711f"/><rect x="1" y="1" width="22" height="22" rx="2" fill="none" stroke="#c55a12"/><path d="M12 12H8a3 3 0 1 1 2.500-4.500Q12 10 13.500 7.500A3 3 0 1 1 16 12a3 3 0 1 1-2.500 4.500Q12 14 10.500 16.500A3 3 0 1 1 8 12" fill="none" stroke="#fff" stroke-width="2.900"/></svg></div>
    <div class="app"><svg width="24" height="24" viewBox="0 0 24 24"><circle cx="12" cy="12" r="12" fill="url(#gFb)"/><path d="M10.200 20v-7H7.700V9.700h2.500V8c0-3 1.600-4.200 5.600-3.700v2.900c-2-.2-2.400.2-2.400 1.500v1h2.500l-.5 3.300h-2v7z" fill="#fff"/></svg></div>
    <div class="app"><svg width="24" height="18"><use href="#yt"/></svg></div>
    <div class="app sony"><svg width="24" height="24" viewBox="0 0 24 24"><rect width="24" height="24" fill="#0c0a20"/><path d="M0 15q10 0 13-4t11-1v3q-8-3-11 1T0 17z" fill="#8d35d8"/><path d="M0 15q8-1 12-4" stroke="#29a7ee" fill="none"/><path d="M12 12q5-4 12 0" stroke="#ec4a62" fill="none"/><text x="12" y="7" class="sony-t">SONY</text><text x="12" y="22" class="liv-t">liv</text></svg></div>
    <div class="app"><svg width="24" height="18"><use href="#yt"/></svg></div>
    <div class="app"><svg width="24" height="24" viewBox="0 0 24 24"><circle cx="12" cy="12" r="12" fill="#1672be"/><path d="M0 12Q1 0 12.500 0C20 0 24 6 24 11q0 6-7 6-4-.5-3-3Q14 9 9 8 3 7.500 0 12z" fill="url(#gEdge)"/><path d="M8 9q-5 5 0 11 4 5 9 3 4-1 5.500-5Q14 22 10 14.500 9.500 11 11 9z" fill="#0d4a93"/><path d="M14 14q1-3-1-4.500-4 1-3 5 1 4 6.500 5 3 0 5.500-1.500l1.500-3.500q-3 2.500-6.500 2.500-4-.5-3-3z" fill="#e9eef2"/></svg></div>
    <div class="app on"><svg width="24" height="24" viewBox="0 0 24 24"><circle cx="12" cy="12" r="12" fill="#fbc116"/><path d="M1.600 6A12 12 0 0 1 22.400 6H12l-5.200 9z" fill="#e33b2e"/><path d="M1.600 6A12 12 0 0 0 12 24l5.200-9-10.400 0z" fill="#279847"/><circle cx="12" cy="12" r="5.800" fill="#fff"/><circle cx="12" cy="12" r="4.600" fill="#2f7de9"/></svg><b class="who">A</b><i class="run active-run"></i></div>
    <div class="app"><svg width="24" height="24" viewBox="0 0 24 24"><path d="M17.500 0 24 3v18l-6.500 3L3 10.500l-2 1.500L0 11V8l2.500-1.300L17.500 18V6L2.500 17.300 0 16v-3z" fill="#1f8fd8"/><path d="M17.500 0 24 3v18l-6.500 3z" fill="#2aa5ee"/></svg><i class="run"></i></div>
    <div class="app"><svg width="24" height="24" viewBox="0 0 24 24"><path d="M0 3q0-1.500 1.500-1.500H8L11 4h11q2 0 2 2v5H0z" fill="#dd9a10"/><path d="M0 7h9l2.500-2H24v16.500q0 .5-.5.500H.5q-.5 0-.5-.5z" fill="url(#gFold)"/><path d="M5 22v-4q0-2 2-2h10q2 0 2 2v4z" fill="#1578c8"/><path d="M8 18.500h8" stroke="#0b4f90" stroke-width="1.500"/></svg></div>
    <div class="app"><svg width="24" height="24" viewBox="0 0 24 24"><circle cx="13" cy="12" r="11" fill="#ed6c47"/><path d="M13 1a11 11 0 0 1 11 11H13z" fill="#ff8f6b"/><path d="M24 12a11 11 0 0 1-20 6l9-6z" fill="#d35230"/><rect y="6" width="12.500" height="12.500" rx="1" fill="#b7331a"/><path d="M4.500 16V8.500h2.200q2.600 0 2.600 2.400T6.700 13.300H4.500" fill="none" stroke="#fff" stroke-width="1.700"/></svg><i class="run"></i></div>
    <div class="app"><svg width="24" height="24" viewBox="0 0 24 24"><path d="M3 13V3h11v9" fill="none" stroke="#d13b1a" stroke-width="2.600" stroke-dasharray="2.800 1.200"/><path d="M6 14h11M14 5v12" stroke="#8d9499" stroke-width="2.800"/><circle cx="20.500" cy="13.500" r="2.300" fill="none" stroke="#1ba1e2" stroke-width="1.800"/><circle cx="12.500" cy="21" r="2.300" fill="none" stroke="#1ba1e2" stroke-width="1.800"/></svg><i class="run"></i></div>
  </div>
  <div class="tray">
    <svg width="12" height="8" viewBox="0 0 12 8"><path d="M1 7l5-5 5 5" fill="none" stroke="#222" stroke-width="1.300"/></svg>
    <svg class="cloud" width="17" height="15" viewBox="0 0 17 15"><path d="M4 11.500Q.5 11 1 8t3.500-3.500Q6 1 9.500 1.500T13.500 5Q16 5.500 15.500 8" fill="#8a8a8a" stroke="#222"/><circle cx="12" cy="10.500" r="4.500" fill="#0f6cd0"/><path d="M9.500 10q2.500-3.500 5-.5M14.500 11q-2.500 3.500-5 .5" fill="none" stroke="#fff" stroke-width="1.100"/></svg>
    <div class="lines lang"><span>ENG</span><span>IN</span></div>
    <svg class="wifi" width="16" height="12" viewBox="0 0 16 12"><path d="M1 5q7-7 14 0M3.500 7q4.500-4.500 9 0" fill="none" stroke="#b5b5b5"/><path d="M5.500 9q2.500-2.500 5 0" fill="none" stroke="#222" stroke-width="1.200"/><circle cx="8" cy="10.500" r="1.400" fill="#222"/></svg>
    <svg class="vol" width="16" height="14" viewBox="0 0 16 14"><path d="M.7 5v4h2.500L7 12V2L3.200 5z" fill="none" stroke="#222" stroke-width="1.100"/><path d="M9 5q1.500 2 0 4" fill="none" stroke="#222"/><path d="M11 3.500q3 3.500 0 7M13 1.500q4 5.500 0 11" fill="none" stroke="#b0b0b0"/></svg>
    <svg width="17" height="12" viewBox="0 0 17 12"><rect x=".7" y="1.200" width="13.500" height="9.200" rx="2" fill="none" stroke="#222" stroke-width="1.200"/><path d="M2.500 3h2.700v5.600H2.500zM15 4h1.500v3.600H15z" fill="#222"/></svg>
    <div class="lines clock"><span>00:24</span><span>14-05-2024</span></div>
    <svg class="bell" width="16" height="16" viewBox="0 0 16 16"><path d="M8 2.300Q3 2 3 7v3L1.500 12.500h12L12 10V9M6 13q1.500 2 3 0" fill="none" stroke="#222" stroke-width="1.200"/><path d="M6 6h3L6 9.500h3M10.500 1.500H14L10.500 5H14" fill="none" stroke="#222" stroke-width="1.200"/></svg>
    <svg class="pre" width="24" height="24" viewBox="0 0 24 24"><path d="M6 2q1-2 4-2h5q3 0 2 3l-4 10q-1 4-5 4H3q-4-1-3-5z" fill="url(#gCop1)"/><path d="M12 13l2-6q0-2 3-2h4q3 1 2 4l-2 8H8q3 0 4-4z" fill="url(#gCop2)"/><rect x="5" y="16" width="18.500" height="7" rx="2" fill="#ffc918"/><text x="14.200" y="22" class="pre-t">PRE</text></svg>
  </div>
</div>
</body>
</html>
```

FILE: styles.css
```css
* { box-sizing: border-box; }
body { margin: 0; width: 1920px; height: 1080px; overflow: hidden; font-family: "Open Sans", "Noto Sans", sans-serif; font-size: 12px; color: #1f1f1f; background: #f9a6ef; }
svg { display: block; flex: none; }
.defs { position: absolute; }
h2, h4, p { margin: 0; }
i { font-style: normal; }

.tabstrip { display: flex; align-items: center; height: 40px; padding-left: 6px; }
.tab-search { display: grid; place-items: center; width: 28px; height: 28px; border-radius: 9px; background: #fbdcf8; }
.tab { display: flex; align-items: center; gap: 8px; width: 230px; height: 34px; padding: 0 12px 6px 0; margin-left: 14px; margin-top: 6px; }
.tab.active { width: 232px; margin-left: 0; padding: 0 11px 6px 8px; border-radius: 10px 10px 0 0; background: #fbdcf8; position: relative; }
.tab.active::before, .tab.active::after { content: ""; position: absolute; bottom: 0; width: 10px; height: 10px; }
.tab.active::before { left: -10px; background: radial-gradient(circle at 0 0, transparent 9.5px, #fbdcf8 10px); }
.tab.active::after { right: -10px; background: radial-gradient(circle at 100% 0, transparent 9.5px, #fbdcf8 10px); }
.tab-title { white-space: nowrap; font-size: 12px; letter-spacing: -.35px; }
.tab.active .tab-title { letter-spacing: -.5px; }
.tab-x { margin-left: auto; width: 10px; }
.tab:not(.active) .tab-x { margin-right: 5px; }
.new-tab { margin-left: 14px; }
.win-controls { display: flex; gap: 35px; margin-left: auto; padding-right: 18px; }

.toolbar { display: flex; align-items: center; height: 46px; background: #fbdcf8; border-radius: 8px 8px 0 0; padding-left: 14px; }
.nav-icons { display: flex; gap: 20px; width: 106px; }
.omnibox { display: flex; align-items: center; width: 1626px; height: 34px; border-radius: 17px; background: #dec3da; padding: 0 16px 0 5px; }
.site-info { display: grid; place-items: center; width: 24px; height: 24px; border-radius: 12px; background: #fbdcf8; }
.url { margin-left: 8px; font-size: 14px; letter-spacing: -.45px; margin-top: -1px; }
.url i { color: #6a5d6c; }
.star { margin-left: auto; }
.tools { display: flex; align-items: center; margin-left: 17px; }
.tools .sep { margin: 0 17px 0 16px; }
.sep { width: 2px; height: 16px; background: #f9a6ef; }
.avatar { display: grid; place-items: center; width: 20px; height: 20px; margin: 0 24px 0 16px; border-radius: 50%; background: #c2185b; color: #fff; font-size: 10px; }

.bookmarks { display: grid; grid-template-columns: 69px repeat(6, 32px) 84px 68px 153px 148px 151px 154px 154px 149px 150px 150px 1fr; align-items: center; height: 35px; padding: 0 0 7px 12px; background: #fbdcf8; border-bottom: 1px solid #c9aec6; font-size: 12px; }
.bm { display: flex; align-items: center; gap: 6px; white-space: nowrap; letter-spacing: -.42px; }
.bm span { margin-top: -1px; }
.bm-right { display: flex; align-items: center; justify-content: flex-end; gap: 7px; padding-right: 15px; letter-spacing: -.4px; white-space: nowrap; }
.bm-right .sep { margin: 0 8px 0 9px; }

.viewport { position: relative; display: flex; height: 912px; background: #fff; overflow: hidden; border-bottom: 1px solid #b9b9b9; }
.page { width: 1903px; }
.container { width: 1296px; margin: 0 auto; }
.site-header { position: relative; z-index: 3; height: 73px; background: rgba(40, 58, 90, .9); }
.header-row { display: flex; justify-content: space-between; align-items: center; height: 73px; padding-bottom: 3px; }
.logo { font: 600 29.500px/36px Lato, sans-serif; letter-spacing: 1.900px; color: #fff; -webkit-text-stroke: .3px #fff; }
.menu { display: flex; gap: 30px; font-size: 15px; font-weight: 500; color: #fff; -webkit-text-stroke: .2px currentColor; }
.menu .current { color: #47b2e4; }
.section-title { margin-top: -15px; height: 110px; text-align: center; }
.section-title h2 { position: relative; height: 60px; font: 800 32px/42px Lato, sans-serif; color: #37517e; }
.section-title h2::before, .section-title h2::after { content: ""; position: absolute; left: 50%; transform: translateX(-50%); }
.section-title h2::before { width: 120px; height: 1px; bottom: 1px; background: #ddd; }
.section-title h2::after { width: 40px; height: 3px; bottom: 0; background: #47b2e4; }
.section-title span { display: inline-block; width: 150px; white-space: nowrap; letter-spacing: -.2px; }
.columns { display: flex; gap: 24px; }
.card { height: 800px; background: #fff; border-top: 3px solid #47b2e4; box-shadow: 0 0 24px 0 rgba(0, 0, 0, .12); padding: 30px; position: relative; }
.info { width: 526px; }
.form { width: 746px; }
.entry { display: flex; gap: 16px; height: 83px; }
.r2 { height: 87px; }
.bubble { display: grid; place-items: center; width: 44px; height: 44px; border-radius: 50%; background: #e7f4fb; }
.entry h4 { font: 700 22px/26px Lato, sans-serif; color: #37517e; margin-bottom: 5px; padding-top: 1px; font-variant-ligatures: none; }
.entry .h-loc { letter-spacing: -.05px; }
.entry .h-call { letter-spacing: .4px; }
.r2 h4 { margin-bottom: 9px; }
.entry p { font-size: 14px; line-height: 21px; color: #6182ba; }
.map { position: relative; width: 520px; height: 450px; overflow: hidden; }

.water path { fill: none; stroke: #9cc0f9; }
.stream path { fill: none; stroke: #9cc0f9; stroke-width: 1; }
.rail path { fill: none; stroke: #d2d4d8; stroke-width: 1; }
.rail .yard { fill: #d6d8db; }
.minor path { fill: none; stroke: #fff; stroke-width: 1.200; }
.major path { fill: none; stroke: #fff; stroke-width: 2.500; stroke-linejoin: round; }
.lbl text { font-family: Roboto, "Noto Sans", sans-serif; paint-order: stroke; stroke: #fff; stroke-width: 2.500px; stroke-linejoin: round; }
.lbl .area { font-size: 9px; font-weight: 500; fill: #54585d; }
.lbl .poi { font-size: 14px; }
.lbl .poi2 { font-size: 11px; }
.lbl .road { font-size: 10px; fill: #5c6064; }
.lbl .river { fill: #3b6fc4; stroke: #9cc0f9; }
.lbl .city { font-size: 26px; font-weight: 700; fill: #c5221f; stroke-width: 3px; }
.lbl .hi { font-size: 25px; }
.lbl .teal { fill: #128391; }
.lbl .slate { fill: #546e7a; }
.lbl .amber { fill: #d56e0c; }
.lbl .blue { fill: #3c78e8; }
.lbl .green { fill: #188038; }
.lbl .pink { fill: #e0245e; }
.glyph { fill: #fff; font: 14px "Noto Sans", sans-serif; text-anchor: middle; }
.google { font: 500 16px "Open Sans", sans-serif; paint-order: stroke; stroke: #fff; stroke-width: 1.500px; }
.place { position: absolute; left: 10px; top: 10px; display: flex; justify-content: space-between; width: 302px; height: 92px; padding: 9px 19px 0 12px; background: #fff; border-radius: 2px; box-shadow: 0 1px 4px rgba(0, 0, 0, .3); font: 12px/16px Roboto, sans-serif; }
.place > div { display: flex; flex-direction: column; }
.place b { font-weight: 500; font-size: 14px; line-height: 18px; color: #111; }
.place small { font-size: 12px; margin-top: 5px; color: #5b5b5b; }
.place a { color: #1a73e8; margin-top: 19px; }
.place .dir { align-items: center; padding-top: 5px; }
.place .dir a { margin-top: 3px; }
.sat { position: absolute; left: 10px; top: 397px; width: 42px; height: 42px; border: 2px solid #fff; border-radius: 3px; box-shadow: 0 1px 4px rgba(0, 0, 0, .4); background: radial-gradient(circle at 75% 70%, #4c6140 0 8%, transparent 30%), radial-gradient(circle at 25% 70%, #5b6650 0 8%, transparent 25%), radial-gradient(circle at 60% 35%, #8f8977 0 10%, transparent 30%), radial-gradient(circle at 20% 20%, #667057 0 10%, transparent 25%), #7c7b69; }
.credits { position: absolute; right: 0; bottom: 0; display: flex; width: 235px; height: 14px; overflow: hidden; background: rgba(245, 245, 245, .72); font: 10px/14px Roboto, sans-serif; color: #000; white-space: nowrap; }
.credits span { flex: none; }
.credits .k { width: 99px; letter-spacing: .18px; }
.credits .d { width: 87px; letter-spacing: .15px; }
.credits .t { width: 38px; letter-spacing: .1px; }
.credits .r { font-size: 9.500px; }

.form label { display: block; font-size: 16px; line-height: 24px; color: #444; height: 104px; }
.form .two { display: flex; gap: 24px; }
.form .two label { flex: 1; }
.field { display: flex; justify-content: flex-end; align-items: flex-end; height: 44px; margin-top: 8px; border: 1px solid #dee2e6; border-radius: 4px; background: #fff; }
.area-field { height: 232px; padding: 0; }
.form > label:nth-of-type(2) { height: 292px; }
.send { display: flex; justify-content: center; }
.send button { width: 175px; height: 48px; padding: 0; border: 0; border-radius: 24px; background: #47b2e4; color: #fff; font: 16px "Open Sans", sans-serif; }

.scrollbar { display: flex; flex-direction: column; width: 17px; height: 911px; background: #f1f1f1; position: relative; z-index: 4; }
.thumb { width: 13px; height: 494px; margin-left: 2px; background: #c1c1c1; }
.down { margin-top: auto; }
.status { position: absolute; left: 0; bottom: 0; z-index: 5; width: 130px; height: 21px; padding-left: 5px; line-height: 21px; background: #f9a6ef; border-radius: 0 4px 0 0; box-shadow: 0 0 1px #999; font-size: 12px; letter-spacing: -.35px; white-space: nowrap; }

.taskbar { display: grid; grid-template-columns: 475px 1fr 354px; align-items: center; height: 47px; background: #ededed; }
.lines { display: flex; flex-direction: column; font-size: 11.500px; line-height: 16px; letter-spacing: -.2px; }
.dim { color: #5e5e5e; }
.weather { position: relative; display: flex; gap: 4px; padding-left: 19px; margin-top: -2px; }
.badge { position: absolute; left: 31px; top: 1px; width: 14px; text-align: center; color: #fff; font-size: 11px; font-weight: 400; line-height: 14px; }
.apps { display: flex; align-items: center; }
.app { position: relative; display: grid; place-items: center; width: 44px; height: 47px; flex: none; }
.search { display: flex; align-items: center; width: 219px; height: 32px; margin-left: 3px; border: 1px solid #ddd; border-bottom-color: #c4c4c4; border-radius: 16px; background: #fbfbfb; padding: 0 5px 0 10px; margin-top: -1px; margin-right: 2px; }
.search span { margin-left: 9px; font-size: 13.500px; letter-spacing: -.2px; color: #666; }
.lotus { margin-left: auto; }
.count { position: absolute; left: 24px; top: 6px; width: 20px; height: 16px; border-radius: 8px; background: #0078d4; color: #fff; font-size: 10.500px; font-weight: 400; line-height: 16px; text-align: center; }
.on::before { content: ""; position: absolute; left: 3px; top: 4px; width: 38px; height: 38px; border-radius: 4px; background: #f9f9f9; box-shadow: 0 0 1px #aaa; }
.on > svg { position: relative; }
.who { position: absolute; left: 24px; top: 6px; width: 16px; height: 16px; border-radius: 8px; background: #c2185b; color: #fff; font-size: 9px; font-weight: 400; line-height: 16px; text-align: center; }
.run { position: absolute; bottom: 3px; left: 19px; width: 6px; height: 3px; border-radius: 2px; background: #8a8a8a; }
.active-run { left: 14px; width: 16px; background: #0078d4; }
.sony-t { font: 700 5px "DejaVu Serif", serif; fill: #fff; text-anchor: middle; }
.liv-t { font: 700 10px "Open Sans", sans-serif; fill: #ffb21a; text-anchor: middle; }
.tray { display: flex; align-items: center; padding-left: 22px; margin-top: -1px; }
.cloud { margin-left: 17px; }
.lang { align-items: center; width: 26px; margin-left: 16px; }
.wifi { margin-left: 17px; }
.vol { margin: 0 8px; }
.clock { align-items: flex-end; width: 70px; margin-left: 8px; font-size: 12px; letter-spacing: -.1px; }
.bell { margin: 0 16px 0 7px; }
.pre-t { font: 700 6.500px "Open Sans", sans-serif; text-anchor: middle; fill: #111; }
```
